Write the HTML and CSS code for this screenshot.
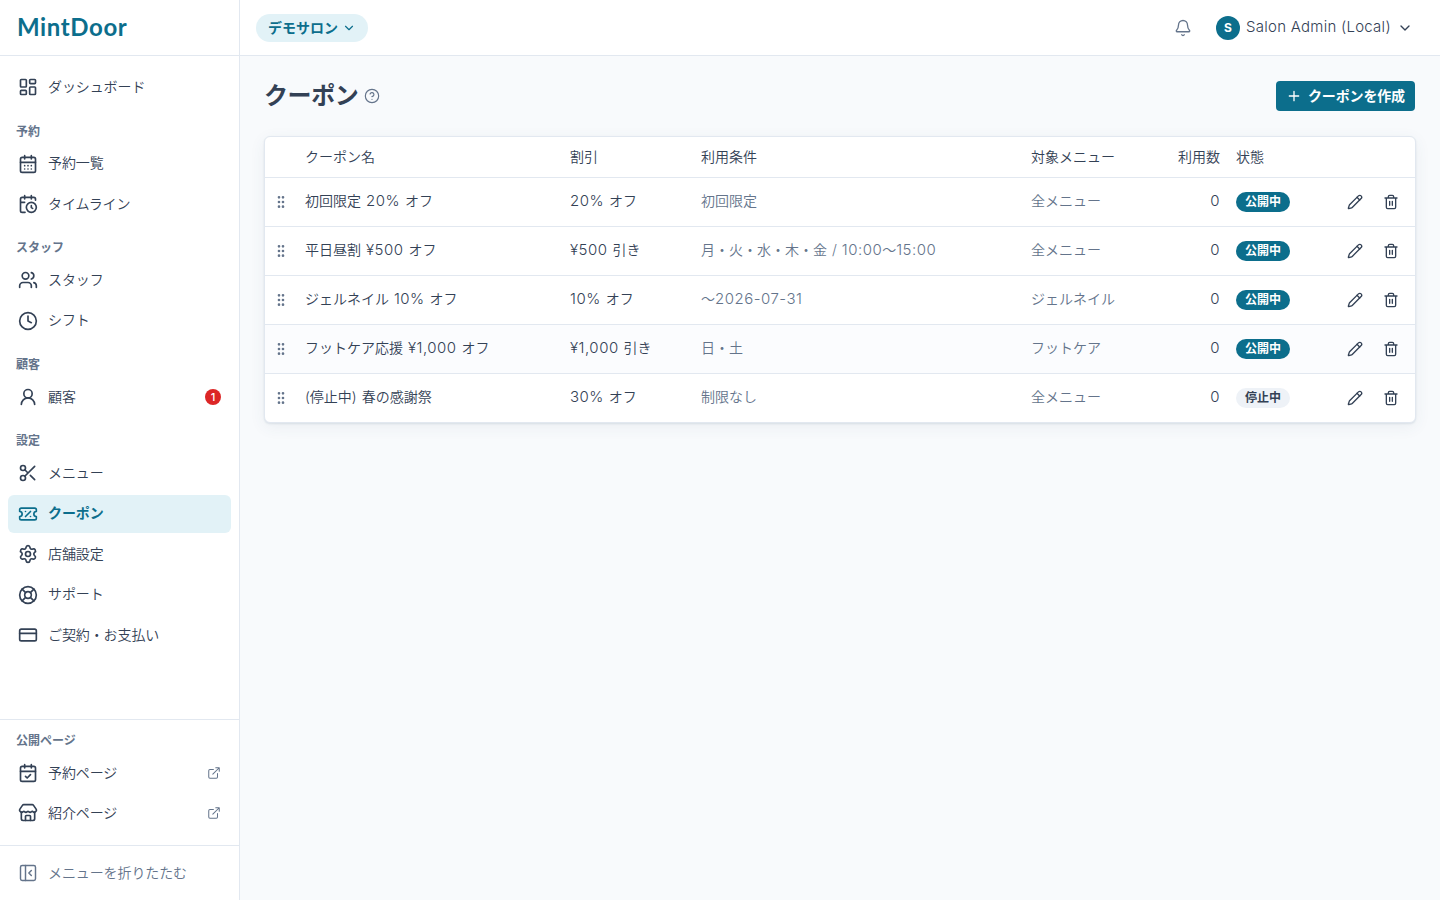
FILE: index.html
```html
<!DOCTYPE html>
<html lang="ja">
  <head>
    <meta charset="UTF-8" />
    <meta name="viewport" content="width=device-width, initial-scale=1.0" />
    <title>クーポン | MintDoor</title>
    <link rel="stylesheet" href="styles.css">
  </head>
  <body>

    <!-- Icon sprite -->
    <svg class="sprite" aria-hidden="true">
      <symbol id="i-dashboard" viewBox="0 0 24 24"><rect width="7" height="9" x="3" y="3" rx="1"/><rect width="7" height="5" x="14" y="3" rx="1"/><rect width="7" height="9" x="14" y="12" rx="1"/><rect width="7" height="5" x="3" y="16" rx="1"/></symbol>
      <symbol id="i-calendar-days" viewBox="0 0 24 24"><path d="M8 2v4M16 2v4"/><rect width="18" height="18" x="3" y="4" rx="2"/><path d="M3 10h18M8 14h.01M12 14h.01M16 14h.01M8 18h.01M12 18h.01M16 18h.01"/></symbol>
      <symbol id="i-calendar-clock" viewBox="0 0 24 24"><path d="M16 14v2.2l1.6 1M16 2v4M21 7.5V6a2 2 0 0 0-2-2H5a2 2 0 0 0-2 2v14a2 2 0 0 0 2 2h3.5M3 10h5M8 2v4"/><circle cx="16" cy="16" r="6"/></symbol>
      <symbol id="i-users" viewBox="0 0 24 24"><path d="M16 21v-2a4 4 0 0 0-4-4H6a4 4 0 0 0-4 4v2"/><path d="M16 3.128a4 4 0 0 1 0 7.744M22 21v-2a4 4 0 0 0-3-3.87"/><circle cx="9" cy="7" r="4"/></symbol>
      <symbol id="i-clock" viewBox="0 0 24 24"><circle cx="12" cy="12" r="10"/><path d="M12 6v6l4 2"/></symbol>
      <symbol id="i-user" viewBox="0 0 24 24"><circle cx="12" cy="8" r="5"/><path d="M20 21a8 8 0 0 0-16 0"/></symbol>
      <symbol id="i-scissors" viewBox="0 0 24 24"><circle cx="6" cy="6" r="3"/><path d="M8.12 8.12 12 12M20 4 8.12 15.88"/><circle cx="6" cy="18" r="3"/><path d="M14.8 14.8 20 20"/></symbol>
      <symbol id="i-ticket" viewBox="0 0 24 24"><path d="M2 9a3 3 0 1 1 0 6v2a2 2 0 0 0 2 2h16a2 2 0 0 0 2-2v-2a3 3 0 1 1 0-6V7a2 2 0 0 0-2-2H4a2 2 0 0 0-2 2Z"/><path d="M9 9h.01M15 9l-6 6M15 15h.01"/></symbol>
      <symbol id="i-settings" viewBox="0 0 24 24"><path d="M9.671 4.136a2.34 2.34 0 0 1 4.659 0 2.34 2.34 0 0 0 3.319 1.915 2.34 2.34 0 0 1 2.33 4.033 2.34 2.34 0 0 0 0 3.831 2.34 2.34 0 0 1-2.33 4.033 2.34 2.34 0 0 0-3.319 1.915 2.34 2.34 0 0 1-4.659 0 2.34 2.34 0 0 0-3.32-1.915 2.34 2.34 0 0 1-2.33-4.033 2.34 2.34 0 0 0 0-3.831A2.34 2.34 0 0 1 6.35 6.051a2.34 2.34 0 0 0 3.319-1.915"/><circle cx="12" cy="12" r="3"/></symbol>
      <symbol id="i-support" viewBox="0 0 24 24"><circle cx="12" cy="12" r="10"/><path d="m4.93 4.93 4.24 4.24M14.83 9.17l4.24-4.24M14.83 14.83l4.24 4.24M9.17 14.83l-4.24 4.24"/><circle cx="12" cy="12" r="4"/></symbol>
      <symbol id="i-card" viewBox="0 0 24 24"><rect width="20" height="14" x="2" y="5" rx="2"/><path d="M2 10h20"/></symbol>
      <symbol id="i-calendar-check" viewBox="0 0 24 24"><path d="M8 2v4M16 2v4"/><rect width="18" height="18" x="3" y="4" rx="2"/><path d="M3 10h18M9 16l2 2 4-4"/></symbol>
      <symbol id="i-store" viewBox="0 0 24 24"><path d="M15 21v-5a1 1 0 0 0-1-1h-4a1 1 0 0 0-1 1v5"/><path d="M17.774 10.31a1.12 1.12 0 0 0-1.549 0 2.5 2.5 0 0 1-3.451 0 1.12 1.12 0 0 0-1.548 0 2.5 2.5 0 0 1-3.452 0 1.12 1.12 0 0 0-1.549 0 2.5 2.5 0 0 1-3.77-3.248l2.889-4.184A2 2 0 0 1 7 2h10a2 2 0 0 1 1.653.873l2.895 4.192a2.5 2.5 0 0 1-3.774 3.244"/><path d="M4 10.95V19a2 2 0 0 0 2 2h12a2 2 0 0 0 2-2v-8.05"/></symbol>
      <symbol id="i-external" viewBox="0 0 24 24"><path d="M15 3h6v6M10 14 21 3M18 13v6a2 2 0 0 1-2 2H5a2 2 0 0 1-2-2V8a2 2 0 0 1 2-2h6"/></symbol>
      <symbol id="i-panel" viewBox="0 0 24 24"><rect width="18" height="18" x="3" y="3" rx="2"/><path d="M9 3v18M16 15l-3-3 3-3"/></symbol>
      <symbol id="i-chevron" viewBox="0 0 24 24"><path d="m6 9 6 6 6-6"/></symbol>
      <symbol id="i-bell" viewBox="0 0 24 24"><path d="M10.268 21a2 2 0 0 0 3.464 0"/><path d="M3.262 15.326A1 1 0 0 0 4 17h16a1 1 0 0 0 .74-1.673C19.41 13.956 18 12.499 18 8A6 6 0 0 0 6 8c0 4.499-1.411 5.956-2.738 7.326"/></symbol>
      <symbol id="i-help" viewBox="0 0 24 24"><circle cx="12" cy="12" r="10"/><path d="M9.09 9a3 3 0 0 1 5.83 1c0 2-3 3-3 3M12 17h.01"/></symbol>
      <symbol id="i-plus" viewBox="0 0 24 24"><path d="M5 12h14M12 5v14"/></symbol>
      <symbol id="i-grip" viewBox="0 0 24 24"><circle cx="9" cy="12" r="1"/><circle cx="9" cy="5" r="1"/><circle cx="9" cy="19" r="1"/><circle cx="15" cy="12" r="1"/><circle cx="15" cy="5" r="1"/><circle cx="15" cy="19" r="1"/></symbol>
      <symbol id="i-pencil" viewBox="0 0 24 24"><path d="M21.174 6.812a1 1 0 0 0-3.986-3.987L3.842 16.174a2 2 0 0 0-.5.83l-1.321 4.352a.5.5 0 0 0 .623.622l4.353-1.32a2 2 0 0 0 .83-.497z"/><path d="m15 5 4 4"/></symbol>
      <symbol id="i-trash" viewBox="0 0 24 24"><path d="M3 6h18M19 6v14a2 2 0 0 1-2 2H7a2 2 0 0 1-2-2V6M8 6V4a2 2 0 0 1 2-2h4a2 2 0 0 1 2 2v2M10 11v6M14 11v6"/></symbol>
    </svg>

    <!-- Sidebar -->
    <aside class="sidebar">
      <div class="brand">MintDoor</div>

      <nav class="nav">
        <a class="nav-item" href="#"><svg><use href="#i-dashboard"/></svg><span>ダッシュボード</span></a>
        <h2 class="nav-heading">予約</h2>
        <a class="nav-item" href="#"><svg><use href="#i-calendar-days"/></svg><span>予約一覧</span></a>
        <a class="nav-item" href="#"><svg><use href="#i-calendar-clock"/></svg><span>タイムライン</span></a>
        <h2 class="nav-heading">スタッフ</h2>
        <a class="nav-item" href="#"><svg><use href="#i-users"/></svg><span>スタッフ</span></a>
        <a class="nav-item" href="#"><svg><use href="#i-clock"/></svg><span>シフト</span></a>
        <h2 class="nav-heading">顧客</h2>
        <a class="nav-item" href="#"><svg><use href="#i-user"/></svg><span>顧客</span><b class="count">1</b></a>
        <h2 class="nav-heading">設定</h2>
        <a class="nav-item" href="#"><svg><use href="#i-scissors"/></svg><span>メニュー</span></a>
        <a class="nav-item active" href="#"><svg><use href="#i-ticket"/></svg><span>クーポン</span></a>
        <a class="nav-item" href="#"><svg><use href="#i-settings"/></svg><span>店舗設定</span></a>
        <a class="nav-item" href="#"><svg><use href="#i-support"/></svg><span>サポート</span></a>
        <a class="nav-item" href="#"><svg><use href="#i-card"/></svg><span>ご契約・お支払い</span></a>
      </nav>

      <div class="public-pages">
        <h2 class="nav-heading">公開ページ</h2>
        <a class="nav-item" href="#"><svg><use href="#i-calendar-check"/></svg><span>予約ページ</span><svg class="external"><use href="#i-external"/></svg></a>
        <a class="nav-item" href="#"><svg><use href="#i-store"/></svg><span>紹介ページ</span><svg class="external"><use href="#i-external"/></svg></a>
      </div>

      <div class="collapse">
        <a class="nav-item" href="#"><svg><use href="#i-panel"/></svg><span>メニューを折りたたむ</span></a>
      </div>
    </aside>

    <div class="page">
      <!-- Top bar -->
      <header class="topbar">
        <button class="salon">デモサロン<svg><use href="#i-chevron"/></svg></button>
        <div class="account">
          <svg class="bell"><use href="#i-bell"/></svg>
          <span class="avatar">S</span>
          <span class="user-name">Salon Admin (Local)</span>
          <svg class="account-arrow"><use href="#i-chevron"/></svg>
        </div>
      </header>

      <!-- Main Content -->
      <main>
        <div class="title-row">
          <h1>クーポン</h1>
          <svg class="help"><use href="#i-help"/></svg>
          <button class="create"><svg><use href="#i-plus"/></svg>クーポンを作成</button>
        </div>

        <div class="card">
          <table>
            <thead>
              <tr>
                <th class="c-grip"></th>
                <th class="c-name">クーポン名</th>
                <th class="c-discount">割引</th>
                <th class="c-terms">利用条件</th>
                <th class="c-target">対象メニュー</th>
                <th class="c-used">利用数</th>
                <th class="c-status">状態</th>
                <th class="c-actions"></th>
              </tr>
            </thead>
            <tbody>
              <tr>
                <td class="c-grip"><svg><use href="#i-grip"/></svg></td>
                <td>初回限定 <span class="num">20%</span> オフ</td>
                <td><span class="num">20%</span> オフ</td>
                <td class="muted">初回限定</td>
                <td class="muted">全メニュー</td>
                <td class="c-used"><span class="num">0</span></td>
                <td class="c-status"><span class="badge">公開中</span></td>
                <td class="c-actions"><div class="actions"><button><svg><use href="#i-pencil"/></svg></button><button><svg><use href="#i-trash"/></svg></button></div></td>
              </tr>
              <tr>
                <td class="c-grip"><svg><use href="#i-grip"/></svg></td>
                <td>平日昼割 <span class="num">¥500</span> オフ</td>
                <td><span class="num">¥500</span> 引き</td>
                <td class="muted">月・火・水・木・金 / <span class="num">10:00</span>〜<span class="num">15:00</span></td>
                <td class="muted">全メニュー</td>
                <td class="c-used"><span class="num">0</span></td>
                <td class="c-status"><span class="badge">公開中</span></td>
                <td class="c-actions"><div class="actions"><button><svg><use href="#i-pencil"/></svg></button><button><svg><use href="#i-trash"/></svg></button></div></td>
              </tr>
              <tr>
                <td class="c-grip"><svg><use href="#i-grip"/></svg></td>
                <td>ジェルネイル <span class="num">10%</span> オフ</td>
                <td><span class="num">10%</span> オフ</td>
                <td class="muted">〜<span class="num">2026-07-31</span></td>
                <td class="muted">ジェルネイル</td>
                <td class="c-used"><span class="num">0</span></td>
                <td class="c-status"><span class="badge">公開中</span></td>
                <td class="c-actions"><div class="actions"><button><svg><use href="#i-pencil"/></svg></button><button><svg><use href="#i-trash"/></svg></button></div></td>
              </tr>
              <tr class="hovered">
                <td class="c-grip"><svg><use href="#i-grip"/></svg></td>
                <td>フットケア応援 <span class="num">¥1,000</span> オフ</td>
                <td><span class="num">¥1,000</span> 引き</td>
                <td class="muted">日・土</td>
                <td class="muted">フットケア</td>
                <td class="c-used"><span class="num">0</span></td>
                <td class="c-status"><span class="badge">公開中</span></td>
                <td class="c-actions"><div class="actions"><button><svg><use href="#i-pencil"/></svg></button><button><svg><use href="#i-trash"/></svg></button></div></td>
              </tr>
              <tr>
                <td class="c-grip"><svg><use href="#i-grip"/></svg></td>
                <td>(停止中) 春の感謝祭</td>
                <td><span class="num">30%</span> オフ</td>
                <td class="muted">制限なし</td>
                <td class="muted">全メニュー</td>
                <td class="c-used"><span class="num">0</span></td>
                <td class="c-status"><span class="badge stopped">停止中</span></td>
                <td class="c-actions"><div class="actions"><button><svg><use href="#i-pencil"/></svg></button><button><svg><use href="#i-trash"/></svg></button></div></td>
              </tr>
            </tbody>
          </table>
        </div>
      </main>
    </div>

  </body>
</html>
```
FILE: styles.css
```css
:root {
  --bg: #f8fafc;
  --primary: #0c6e8c;
  --primary-soft: #e2f2f7;
  --text: #334155;
  --muted: #64748b;
  --border: #e2e8f0;
}

* {
  box-sizing: border-box;
}

body {
  margin: 0;
  display: flex;
  height: 100vh;
  overflow: hidden;
  background: var(--bg);
  color: var(--text);
  font-family: Inter, "Noto Sans CJK JP", sans-serif;
  font-size: 14px;
  font-weight: 350;
  line-height: 20px;
}

h1,
h2 {
  margin: 0;
}

a {
  color: inherit;
  text-decoration: none;
}

button {
  border: 0;
  padding: 0;
  background: none;
  color: inherit;
  font: inherit;
  white-space: nowrap;
}

svg {
  display: block;
  flex: none;
  width: 16px;
  height: 16px;
  fill: none;
  stroke: currentColor;
  stroke-width: 2;
  stroke-linecap: round;
  stroke-linejoin: round;
}

.sprite {
  display: none;
}

/* Sidebar */
.sidebar {
  flex: none;
  width: 240px;
  display: flex;
  flex-direction: column;
  background: #fff;
  border-right: 1px solid var(--border);
}

.brand {
  flex: none;
  height: 56px;
  padding-left: 17px;
  border-bottom: 1px solid var(--border);
  color: var(--primary);
  font-family: Lato, sans-serif;
  font-size: 24px;
  font-weight: 700;
  line-height: 53px;
  letter-spacing: 0.6px;
}

.nav {
  flex: 1;
  padding: 12px 8px 0;
}

.nav-item {
  display: flex;
  align-items: center;
  gap: 10px;
  height: 38.5px;
  margin-bottom: 2px;
  padding: 0 10px;
  border-radius: 6px;
}

.nav-item span {
  margin-bottom: 1px;
  letter-spacing: -0.1px;
}

.nav-item svg {
  width: 20px;
  height: 20px;
}

.nav-item.active {
  background: var(--primary-soft);
  color: var(--primary);
  font-weight: 700;
}

.nav-heading {
  height: 35.75px;
  padding: 14px 8px 0;
  color: var(--muted);
  font-size: 12px;
  font-weight: 700;
  line-height: 18px;
}

.count {
  width: 16px;
  height: 16px;
  margin-left: auto;
  border-radius: 50%;
  background: #dc2626;
  color: #fff;
  font-size: 11px;
  font-weight: 500;
  line-height: 16px;
  text-align: center;
}

.public-pages {
  height: 126px;
  padding: 0 8px;
  border-top: 1px solid var(--border);
}

.public-pages .nav-heading {
  height: 34px;
  padding-top: 12px;
}

.public-pages .nav-item {
  margin-bottom: 1.5px;
}

.nav-item .external {
  width: 14px;
  height: 14px;
  margin-left: auto;
  color: var(--muted);
  stroke-width: 1.75;
}

.collapse {
  height: 55px;
  padding: 8px 8px 0;
  border-top: 1px solid var(--border);
  color: var(--muted);
}

.collapse svg {
  stroke-width: 1.75;
}

/* Top bar */
.page {
  flex: 1;
  min-width: 0;
}

.topbar {
  display: flex;
  align-items: center;
  justify-content: space-between;
  height: 56px;
  padding: 0 27px 0 16px;
  background: #fff;
  border-bottom: 1px solid var(--border);
}

.salon {
  display: flex;
  align-items: center;
  gap: 4px;
  width: 112px;
  height: 28px;
  padding: 0 12px;
  border-radius: 14px;
  background: var(--primary-soft);
  color: var(--primary);
  font-weight: 700;
}

.salon svg {
  width: 14px;
  height: 14px;
}

.account {
  display: flex;
  align-items: center;
}

.bell {
  width: 18px;
  height: 18px;
  margin-right: 24px;
  color: var(--muted);
  stroke-width: 1.75;
}

.avatar {
  width: 24px;
  height: 24px;
  border-radius: 50%;
  background: var(--primary);
  color: #fff;
  font-size: 12px;
  font-weight: 700;
  line-height: 24px;
  text-align: center;
}

.user-name {
  width: 145px;
  margin: 0 6px 1px;
  font-size: 15px;
  font-weight: 300;
  letter-spacing: 0.26px;
  white-space: nowrap;
}

/* Main content */
main {
  padding: 24px;
}

.title-row {
  display: flex;
  align-items: center;
  height: 32px;
  margin-bottom: 24px;
}

h1 {
  font-size: 24px;
  font-weight: 700;
  line-height: 32px;
  letter-spacing: -0.4px;
}

.help {
  margin-left: 6px;
  color: var(--muted);
  stroke-width: 1.75;
}

.create {
  display: flex;
  align-items: center;
  gap: 6px;
  width: 139px;
  height: 30px;
  margin-left: auto;
  margin-right: 1px;
  padding: 0 10px;
  border-radius: 4px;
  background: var(--primary);
  color: #fff;
  font-weight: 700;
  letter-spacing: -0.15px;
}

.card {
  border: 1px solid var(--border);
  border-radius: 6px;
  background: #fff;
  box-shadow: 0 1px 2px rgba(51, 85, 119, 0.12), 0 4px 16px rgba(51, 85, 119, 0.07);
  overflow: hidden;
}

table {
  width: 100%;
  border-collapse: separate;
  border-spacing: 0;
  table-layout: fixed;
}

th,
td {
  height: 49px;
  padding: 0 8px 2px;
  border-bottom: 1px solid var(--border);
  text-align: left;
  white-space: nowrap;
  word-spacing: 1px;
}

th {
  height: 41px;
  padding-bottom: 1px;
  font-weight: 350;
}

tbody tr:last-child td {
  height: 48px;
  border-bottom: 0;
}

td.c-grip,
td.c-status,
td.c-actions {
  padding-bottom: 0;
}

.hovered {
  background: #fbfcfe;
}

.c-grip {
  width: 32px;
  color: var(--muted);
}

.c-name {
  width: 265px;
}

.c-discount {
  width: 131px;
}

.c-terms {
  width: 330px;
}

.c-target {
  width: 137px;
}

.c-used {
  width: 68px;
  text-align: right;
}

.c-status {
  width: 82px;
}

.muted {
  color: var(--muted);
}

.num {
  font-size: 15px;
  font-weight: 300;
  line-height: 1;
  letter-spacing: 0.5px;
}

.badge {
  display: block;
  width: 54px;
  height: 20px;
  border-radius: 10px;
  background: var(--primary);
  color: #fff;
  font-size: 12px;
  font-weight: 700;
  line-height: 20px;
  text-align: center;
}

.badge.stopped {
  background: #eef2f7;
  color: var(--text);
}

.actions {
  display: flex;
  justify-content: flex-end;
  gap: 4px;
}

.actions button {
  display: grid;
  place-items: center;
  width: 32px;
  height: 32px;
}
```
